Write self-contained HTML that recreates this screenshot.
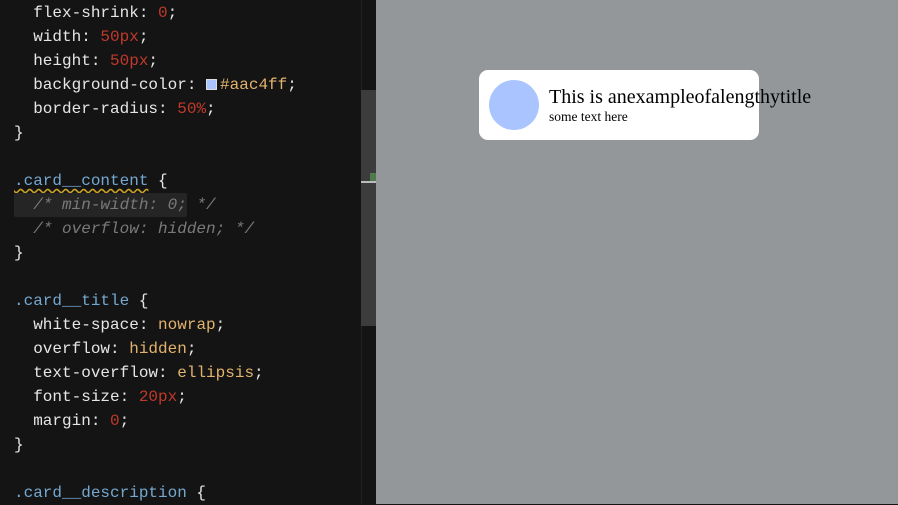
<!DOCTYPE html>
<html><head><meta charset="utf-8"><style>
*{margin:0;padding:0;box-sizing:border-box}
body{width:898px;height:504px;overflow:hidden;position:relative;background:#141414}
#ed{position:absolute;left:0;top:0;width:361px;height:504px;background:#141414;font-family:"Liberation Mono",monospace;font-size:16px;color:#e6e6e6;white-space:pre}
.l{position:absolute;left:14px;height:24px;line-height:24px}
.n{color:#c0392b}.s{color:#e2b36c}.c{color:#7a7a7a;font-style:italic}.sel{color:#74a8d0}
.sw{display:inline-block;width:11px;height:11px;background:#aac4ff;border:1px solid #ddd;vertical-align:-1px;margin-right:3px}
#sb{position:absolute;left:361px;top:90px;width:15px;height:236px;background:#3c3c3c}
#gut{position:absolute;left:361px;top:0;width:1px;height:504px;background:#222}
#pv{position:absolute;left:376px;top:0;width:522px;height:504px;background:#939799}
.card{position:absolute;left:103px;top:70px;width:280px;height:70px;background:#fff;border-radius:9px}
.av{position:absolute;left:10px;top:10px;width:50px;height:50px;border-radius:50%;background:#aac4ff}
.t{position:absolute;left:70px;top:16px;font:20px "Liberation Serif",serif;white-space:nowrap;color:#000}
.d{position:absolute;left:70px;top:39px;font:13.5px "Liberation Serif",serif;color:#000}
</style></head><body>
<div id="ed">
<div class="l" style="top:1px">  flex-shrink: <span class="n">0</span>;</div>
<div class="l" style="top:25px">  width: <span class="n">50px</span>;</div>
<div class="l" style="top:49px">  height: <span class="n">50px</span>;</div>
<div class="l" style="top:73px">  background-color: <span class="sw"></span><span class="s">#aac4ff</span>;</div>
<div class="l" style="top:97px">  border-radius: <span class="n">50%</span>;</div>
<div class="l" style="top:121px">}</div>
<div class="l" style="top:169px"><span class="sel" style="text-decoration:underline wavy #c9a227;text-underline-offset:3px">.card__content</span> {</div>
<div style="position:absolute;left:14px;top:193px;width:173px;height:24px;background:#252525;border-radius:2px"></div>
<div class="l c" style="top:193px">  /* min-width: 0; */</div>
<div class="l c" style="top:217px">  /* overflow: hidden; */</div>
<div class="l" style="top:241px">}</div>
<div class="l" style="top:289px"><span class="sel">.card__title</span> {</div>
<div class="l" style="top:313px">  white-space: <span class="s">nowrap</span>;</div>
<div class="l" style="top:337px">  overflow: <span class="s">hidden</span>;</div>
<div class="l" style="top:361px">  text-overflow: <span class="s">ellipsis</span>;</div>
<div class="l" style="top:385px">  font-size: <span class="n">20px</span>;</div>
<div class="l" style="top:409px">  margin: <span class="n">0</span>;</div>
<div class="l" style="top:433px">}</div>
<div class="l" style="top:481px"><span class="sel">.card__description</span> {</div>
</div>
<div id="gut"></div>
<div id="sb"></div>
<div style="position:absolute;left:370px;top:173px;width:6px;height:9px;background:#4f7a4f"></div>
<div style="position:absolute;left:361px;top:181px;width:15px;height:2px;background:#bbb"></div>
<div id="pv"><div class="card"><div class="av"></div><div class="t">This is anexampleofalengthytitle</div><div class="d">some text here</div></div></div>
</body></html>
